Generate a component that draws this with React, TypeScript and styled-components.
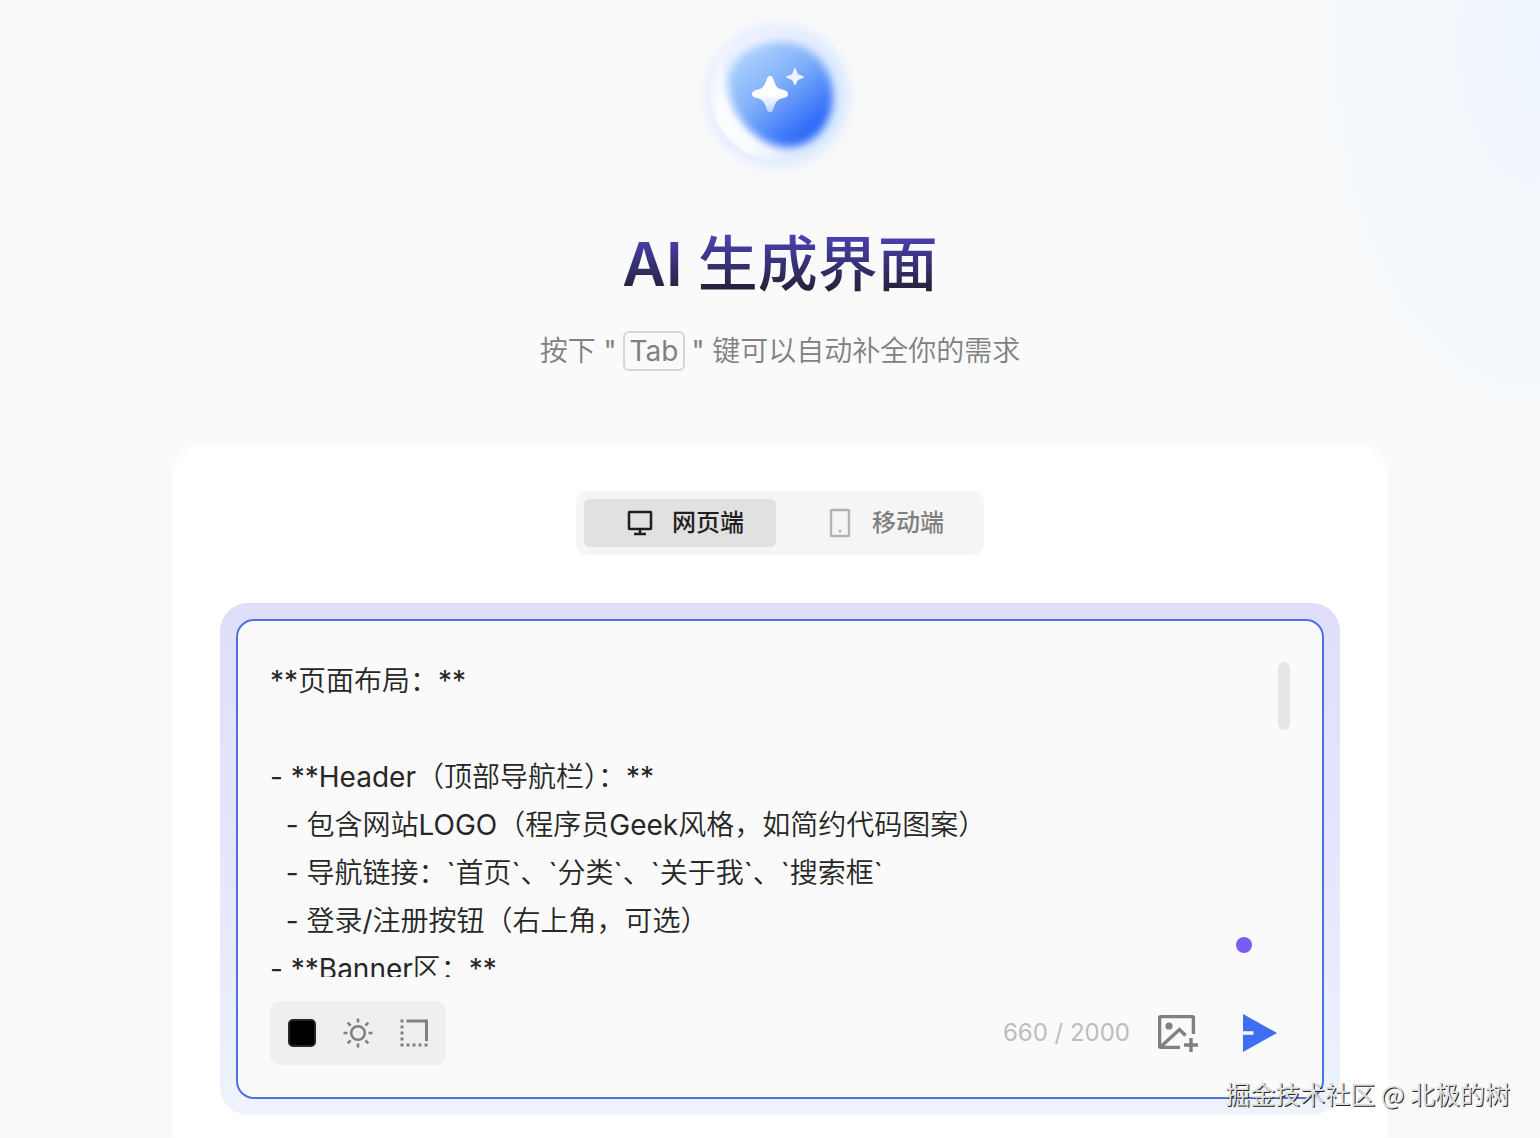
import React, { useState } from "react";
import styled, { createGlobalStyle } from "styled-components";

const GlobalStyle = createGlobalStyle`
  *, *::before, *::after { box-sizing: border-box; }
  body {
    margin: 0;
    font-family: Inter, "Noto Sans CJK SC DemiLight", "Noto Sans CJK SC", sans-serif;
    -webkit-font-smoothing: antialiased;
    background: #fafafa;
    color: #262626;
  }
  button, textarea { font: inherit; }
`;

const Page = styled.div`
  position: relative;
  height: 100vh;
  overflow: hidden;
  padding: 0 152px 0 172px;
  display: flex;
  flex-direction: column;
  background: radial-gradient(ellipse 320px 540px at 100% 4%, #eff5fe 0%, #f4f8fb 45%, #f9fafb 85%, #fafafa 100%) #fafafa;
`;

const Hero = styled.header`
  flex: none;
  display: flex;
  flex-direction: column;
  align-items: center;
`;

const Orb = styled.svg`
  display: block;
  width: 200px;
  height: 192px;
`;

const Title = styled.h1`
  margin: 32px 0 0;
  font-family: Inter, "Noto Sans CJK SC", sans-serif;
  font-size: 60px;
  line-height: 80px;
  font-weight: 600;
  background: linear-gradient(180deg, #4d43b8 12%, #242137 84%);
  background-clip: text;
  -webkit-background-clip: text;
  color: transparent;
`;

const TitleHan = styled.span`
  font-weight: 500;
`;

const Hint = styled.p`
  margin: 23px 0 0;
  display: flex;
  align-items: center;
  gap: 6px;
  font-size: 28px;
  line-height: 48px;
  color: #808080;
`;

const Key = styled.kbd`
  height: 40px;
  padding: 0 5px;
  border: 2px solid #d6d6d6;
  border-radius: 6px;
  font-family: inherit;
  line-height: 36px;
`;

const Card = styled.main`
  flex: none;
  margin-top: 69px;
  padding: 47px 48px 48px;
  display: flex;
  flex-direction: column;
  align-items: center;
  gap: 48px;
  border-radius: 32px;
  background: #fff;
`;

const Segmented = styled.div`
  display: flex;
  gap: 8px;
  padding: 8px;
  border-radius: 12px;
  background: #f5f5f5;
`;

const Segment = styled.button<{ $active: boolean }>`
  width: 192px;
  height: 48px;
  padding: 0 0 0 40px;
  display: flex;
  align-items: center;
  gap: 16px;
  border: 0;
  border-radius: 6px;
  background: ${(p) => (p.$active ? "#e1e1e1" : "transparent")};
  color: ${(p) => (p.$active ? "#1f1f1f" : "#808080")};
  font-family: Inter, "Noto Sans CJK SC", sans-serif;
  font-size: 24px;
  font-weight: 500;
  line-height: 32px;
  cursor: pointer;

  svg {
    width: 32px;
    height: 32px;
    color: ${(p) => (p.$active ? "#1f1f1f" : "#b3b3b3")};
  }
`;

const Glow = styled.section`
  position: relative;
  width: 100%;
  padding: 16px;
  border-radius: 28px;
  background: linear-gradient(180deg, #dfdefa 0%, #e6e6fc 50%, #eef3fc 100%);
`;

const Composer = styled.form`
  padding: 36px 32px 32px;
  display: flex;
  flex-direction: column;
  gap: 24px;
  border: 2px solid #4b73de;
  border-radius: 18px;
  background: #fafafa;
`;

const Editor = styled.div`
  display: flex;
`;

const Prompt = styled.textarea`
  flex: 1;
  height: 320px;
  margin: 0;
  padding: 0;
  border: 0;
  outline: 0;
  resize: none;
  overflow: hidden;
  background: transparent;
  color: #262626;
  font-size: 28px;
  line-height: 48px;
`;

const ScrollThumb = styled.div`
  width: 12px;
  height: 68px;
  margin-top: 5px;
  border-radius: 6px;
  background: #e6e6e6;
`;

const Footer = styled.div`
  display: flex;
  align-items: center;
  justify-content: space-between;
`;

const Tools = styled.div`
  height: 64px;
  padding: 0 18px;
  display: flex;
  align-items: center;
  gap: 27px;
  border-radius: 10px;
  background: #efefef;
`;

const IconButton = styled.button<{ $size: number }>`
  width: ${(p) => p.$size}px;
  height: ${(p) => p.$size}px;
  padding: 0;
  display: grid;
  place-items: center;
  border: 0;
  background: transparent;
  color: #808080;
  cursor: pointer;

  svg {
    display: block;
  }
`;

const Swatch = styled.button`
  width: 28px;
  height: 28px;
  padding: 0;
  border: 2px solid #262626;
  border-radius: 5px;
  background: #000;
  cursor: pointer;
`;

const Actions = styled.div`
  display: flex;
  align-items: center;
  padding-right: 10px;
`;

const Counter = styled.span`
  margin-right: 28px;
  font-size: 24px;
  line-height: 32px;
  color: #bdbdbd;
`;

const SendSlot = styled.div`
  margin-left: 42px;
`;

const Cursor = styled.span`
  position: absolute;
  right: 88px;
  bottom: 162px;
  width: 16px;
  height: 16px;
  border-radius: 50%;
  background: #7a5cf5;
`;

const Watermark = styled.div`
  position: absolute;
  right: 30px;
  bottom: 25px;
  font-size: 25px;
  line-height: 40px;
  font-family: "Noto Sans CJK SC", sans-serif;
  color: #e0e0e0;
  text-shadow: 1px 1px 0 #222;
`;

const promptText = [
  "**页面布局：**",
  "",
  "- **Header（顶部导航栏）：**",
  "  - 包含网站LOGO（程序员Geek风格，如简约代码图案）",
  "  - 导航链接：`首页`、`分类`、`关于我`、`搜索框`",
  "  - 登录/注册按钮（右上角，可选）",
  "- **Banner区：**",
].join("\n");

function SparkOrb() {
  return (
    <Orb viewBox="0 0 200 192" aria-hidden="true">
      <defs>
        <linearGradient id="core" x1="0.12" y1="0.15" x2="0.72" y2="0.88">
          <stop offset="0" stopColor="#abd0fc" />
          <stop offset="0.45" stopColor="#7fb0fa" />
          <stop offset="1" stopColor="#2e6af8" />
        </linearGradient>
        <linearGradient id="shell" x1="0.1" y1="0.4" x2="1" y2="0.7">
          <stop offset="0" stopColor="#f3f5ff" />
          <stop offset="0.45" stopColor="#e6eefe" />
          <stop offset="1" stopColor="#d8ecfe" />
        </linearGradient>
        <linearGradient id="spark" x1="0" y1="0" x2="0" y2="1">
          <stop offset="0.5" stopColor="#fff" />
          <stop offset="1" stopColor="#fff" stopOpacity="0.55" />
        </linearGradient>
        <linearGradient id="crescent" x1="0" y1="0" x2="1" y2="1">
          <stop offset="0" stopColor="#fff" stopOpacity="0" />
          <stop offset="0.4" stopColor="#fff" stopOpacity="0.9" />
          <stop offset="0.65" stopColor="#fff" stopOpacity="0.8" />
          <stop offset="1" stopColor="#fff" stopOpacity="0" />
        </linearGradient>
        <filter id="haze" x="-30%" y="-30%" width="160%" height="160%">
          <feGaussianBlur stdDeviation="7" />
        </filter>
        <filter id="soft" x="-30%" y="-30%" width="160%" height="160%">
          <feGaussianBlur stdDeviation="4.5" />
        </filter>
        <filter id="edge" x="-30%" y="-30%" width="160%" height="160%">
          <feGaussianBlur stdDeviation="4" />
        </filter>
        <filter id="rim" x="-30%" y="-30%" width="160%" height="160%">
          <feGaussianBlur stdDeviation="1.5" />
        </filter>
      </defs>
      <circle cx="98" cy="96" r="71" fill="#dde9fe" filter="url(#haze)" />
      <circle cx="100" cy="94" r="65" fill="url(#shell)" filter="url(#edge)" />
      <path d="M54 42C22 68 24 116 52 142c18 18 42 22 64 14C86 150 50 124 44 90c-3-18 0-34 10-48z" fill="url(#crescent)" filter="url(#rim)" />
      <path d="M48 82c0-26 26-40 53-40 30 0 52 24 52 54 0 28-18 50-44 51-32 0-60-33-61-65z" fill="url(#core)" filter="url(#soft)" />
      <path d="M90 76c2 0 3 2 4 5 2 6 4 8 10 9 3 1 4 2 4 4s-1 3-4 4c-6 1-8 3-10 9-1 4-2 5-4 5s-3-1-4-5c-2-6-4-8-10-9-3-1-4-2-4-4s1-3 4-4c6-1 8-3 10-9 1-3 2-5 4-5z" fill="url(#spark)" />
      <path d="M115 68c1 0 2 5 3 6s6 2 6 3-5 2-6 3-2 5-3 5-2-4-3-5-6-2-6-3 5-2 6-3 2-6 3-6z" fill="#edf4ff" />
    </Orb>
  );
}

function DesktopIcon() {
  return (
    <svg viewBox="0 0 32 32" fill="none" stroke="currentColor" strokeWidth="2.5" aria-hidden="true">
      <rect x="5" y="5" width="22" height="17" rx="0.5" />
      <path d="M16 22v5M10 27h12" />
    </svg>
  );
}

function PhoneIcon() {
  return (
    <svg viewBox="0 0 32 32" fill="none" stroke="currentColor" strokeWidth="2.4" aria-hidden="true">
      <rect x="7" y="3" width="18" height="26" rx="0.5" />
      <circle cx="16" cy="24" r="1.5" fill="currentColor" stroke="none" />
    </svg>
  );
}

function SunIcon() {
  return (
    <svg width="30" height="30" viewBox="0 0 30 30" fill="none" stroke="currentColor" strokeWidth="2.6" aria-hidden="true">
      <circle cx="15" cy="15" r="6.800" />
      <path d="M15 .5v4M15 25.500v4M.5 15h4M25.500 15h4M4.700 4.700l2.900 2.900M22.400 22.400l2.900 2.900M25.300 4.700l-2.900 2.900M7.600 22.400l-2.900 2.900" />
    </svg>
  );
}

function CornerIcon() {
  return (
    <svg width="28" height="28" viewBox="0 0 28 28" fill="none" stroke="currentColor" strokeWidth="3" aria-hidden="true">
      <path d="M6.500 2h20v20" />
      <path d="M2 .5v27" strokeDasharray="3 3" />
      <path d="M6.500 26h21" strokeDasharray="3 3" />
    </svg>
  );
}

function AddImageIcon() {
  return (
    <svg width="40" height="40" viewBox="0 0 40 40" fill="none" stroke="currentColor" strokeWidth="3.4" aria-hidden="true">
      <path d="M22 34.400H2.600a1 1 0 0 1-1-1V4.600a1 1 0 0 1 1-1h31.800a1 1 0 0 1 1 1V21" />
      <circle cx="11" cy="13" r="3.600" fill="currentColor" stroke="none" />
      <path d="M3 33.500L21.500 16.500l6 6" />
      <path d="M26 32h14M33 25v14" />
    </svg>
  );
}

function SendIcon() {
  return (
    <svg width="36" height="40" viewBox="0 0 36 40" aria-hidden="true">
      <path d="M1 1l34 19L1 39V21.700h10.500v-3.400H1z" fill="#3f6ef2" />
    </svg>
  );
}

export default function App() {
  const [platform, setPlatform] = useState<"web" | "mobile">("web");
  const [text, setText] = useState(promptText);

  return (
    <>
      <GlobalStyle />
      <Page>
        <Hero>
          <SparkOrb />
          <Title>
            AI <TitleHan>生成界面</TitleHan>
          </Title>
          <Hint>
            <span>按下 "</span>
            <Key>Tab</Key>
            <span>" 键可以自动补全你的需求</span>
          </Hint>
        </Hero>
        <Card>
          <Segmented>
            <Segment type="button" $active={platform === "web"} onClick={() => setPlatform("web")}>
              <DesktopIcon />
              网页端
            </Segment>
            <Segment type="button" $active={platform === "mobile"} onClick={() => setPlatform("mobile")}>
              <PhoneIcon />
              移动端
            </Segment>
          </Segmented>
          <Glow>
            <Composer onSubmit={(e) => e.preventDefault()}>
              <Editor>
                <Prompt aria-label="需求" spellCheck={false} value={text} onChange={(e) => setText(e.target.value)} />
                <ScrollThumb />
              </Editor>
              <Footer>
                <Tools>
                  <Swatch type="button" aria-label="颜色" />
                  <IconButton type="button" $size={30} aria-label="亮度">
                    <SunIcon />
                  </IconButton>
                  <IconButton type="button" $size={28} aria-label="圆角">
                    <CornerIcon />
                  </IconButton>
                </Tools>
                <Actions>
                  <Counter>660 / 2000</Counter>
                  <IconButton type="button" $size={40} aria-label="添加图片">
                    <AddImageIcon />
                  </IconButton>
                  <SendSlot>
                    <IconButton type="submit" $size={40} aria-label="发送">
                      <SendIcon />
                    </IconButton>
                  </SendSlot>
                </Actions>
              </Footer>
            </Composer>
            <Cursor />
          </Glow>
        </Card>
        <Watermark>掘金技术社区 @ 北极的树</Watermark>
      </Page>
    </>
  );
}
